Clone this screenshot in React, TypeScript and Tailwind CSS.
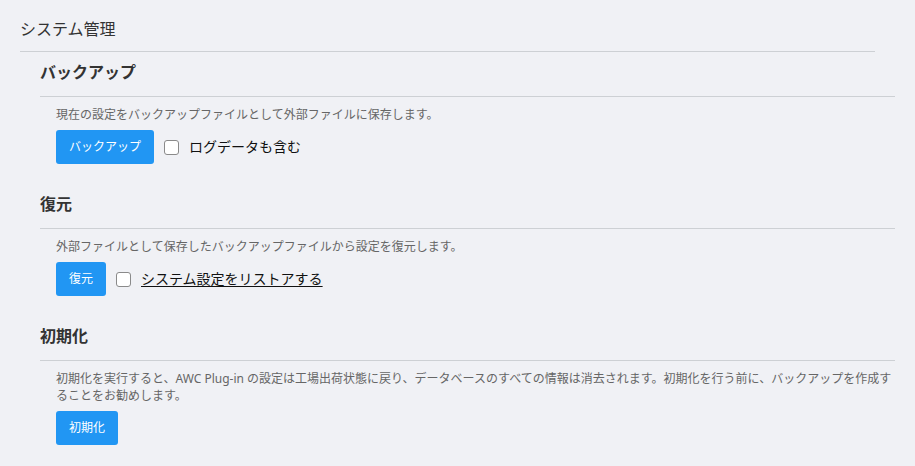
const font = { fontFamily: '"Noto Sans", "Noto Sans CJK JP", sans-serif' }

function Check({ label, underline }: { label: string; underline?: boolean }) {
    return (
        <label className="flex items-center gap-[10px] cursor-pointer">
            <span className="w-[15px] h-[15px] rounded-[3px] border border-[#8a8a8a] bg-white shrink-0" />
            <span className={`text-[14px] leading-[20px] text-[#111] ${underline ? 'underline underline-offset-2' : ''}`}>{label}</span>
        </label>
    )
}

function Section({ title, desc, button, check, first }: { title: string; desc: string; button: string; check?: React.ReactNode; first?: boolean }) {
    return (
        <section className={first ? 'mt-[8px]' : 'mt-[28px]'}>
            <h2 className="text-[16px] leading-[24px] font-bold text-[#333] pb-[12px] border-b border-[#cdd0d4]">{title}</h2>
            <div className="pl-[16px]">
                <p className="mt-[9px] text-[12px] leading-[17px] text-[#666]">{desc}</p>
                <div className="mt-[7px] flex items-center gap-[10px]">
                    <button className="h-[34px] px-[13px] rounded-[3px] bg-[#2196f3] text-white text-[12px]">{button}</button>
                    {check}
                </div>
            </div>
        </section>
    )
}

export default function App() {
    return (
        <div className="w-[915px] h-[466px] bg-[#f0f1f5] px-[20px] pt-[17px] overflow-hidden" style={font}>
            <div className="mr-[20px] pb-[10px] border-b border-[#cdd0d4]">
                <h1 className="text-[16px] leading-[24px] text-[#333]">システム管理</h1>
            </div>
            <div className="pl-[20px]">
                <Section
                    first
                    title="バックアップ"
                    desc="現在の設定をバックアップファイルとして外部ファイルに保存します。"
                    button="バックアップ"
                    check={<Check label="ログデータも含む" />}
                />
                <Section
                    title="復元"
                    desc="外部ファイルとして保存したバックアップファイルから設定を復元します。"
                    button="復元"
                    check={<Check label="システム設定をリストアする" underline />}
                />
                <Section
                    title="初期化"
                    desc="初期化を実行すると、AWC Plug-in の設定は工場出荷状態に戻り、データベースのすべての情報は消去されます。初期化を行う前に、バックアップを作成することをお勧めします。"
                    button="初期化"
                />
            </div>
        </div>
    )
}
